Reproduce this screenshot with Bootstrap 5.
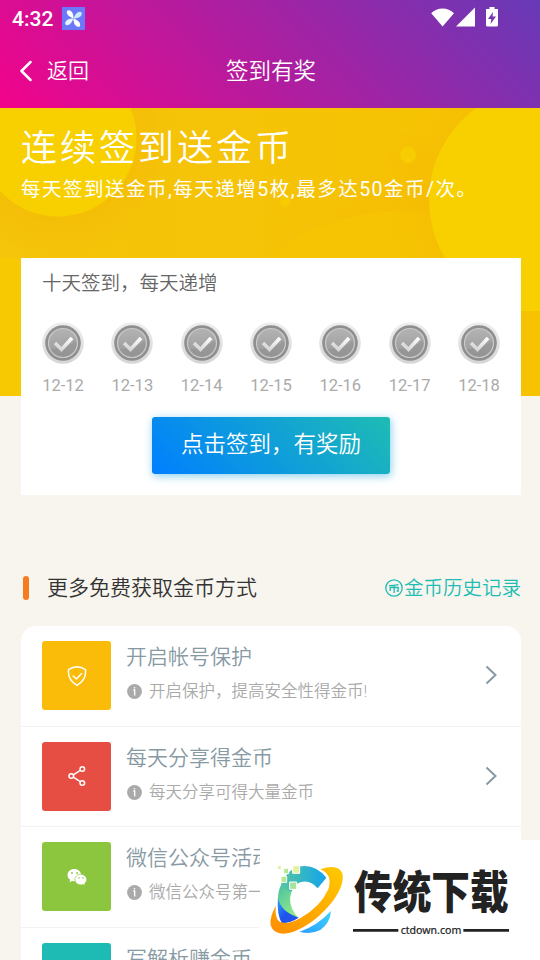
<!DOCTYPE html>
<html lang="zh-CN">
<head>
<meta charset="utf-8">
<meta name="viewport" content="width=device-width, initial-scale=1">
<title>签到有奖</title>
<link href="https://cdn.jsdelivr.net/npm/bootstrap@5.3.0/dist/css/bootstrap.min.css" rel="stylesheet">
<style>
body{font-family:Roboto,"Noto Sans CJK SC",sans-serif;font-weight:350;background:#f8f5ee;height:960px;overflow:hidden;line-height:1}
svg{display:block;flex-shrink:0}
.app-head{height:108px;background:linear-gradient(45deg,#f2038a 0%,#673ab7 100%)}
.status{height:37px;padding:0 41px 0 12px}
.clock{font-size:21px;font-weight:500;line-height:24px}
.title-bar{height:68px;padding-left:20px}
.back-label{font-size:21px;margin-left:15px}
.page-title{font-size:22.5px;padding-left:2px}
.banner{height:288px}
.banner-art{z-index:0}
.banner-text{padding:22px 21px 0;z-index:1}
.banner h1{font-size:36px;letter-spacing:3px;line-height:38px;font-weight:350}
.banner p{font-size:19.5px;letter-spacing:1.5px;line-height:24px;margin-top:10px;white-space:nowrap;font-weight:400}
.sign{margin:-138px 19px 0 21px;height:237px;z-index:2}
.sign-title{font-size:19.5px;line-height:24px;color:#666;padding:14px 21px 0}
.days{padding:26px 21px 0}
.day{width:42px;font-size:16.5px;color:#aaa;font-weight:400;white-space:nowrap}
.day-label{margin-top:12px;line-height:19px}
.sign-btn{width:238px;height:57px;margin-top:22px;border:0;border-radius:3px;font-size:22.5px;font-weight:350;color:#fff;background:linear-gradient(45deg,#007fff,#1ebcb4);box-shadow:1px 2px 8px rgba(15,160,220,.5);padding:0 0 1px}
.section-head{margin:78px 19px 0 23px;height:30px}
.bar-mark{width:6px;height:24px;border-radius:3px;background:#f67c20}
.section-title{font-size:21px;color:#333;margin-left:18px}
.history{font-size:19.5px;color:#1ebcb4}
.history span{padding-top:2px}
.ways{margin:23px 19px 0 21px;border-radius:15px 15px 0 0;height:334px;overflow:hidden}
.way{height:100.6px;padding:15px 21px 0;border-bottom:1px solid #f2f3f3}
.tile{width:69px;height:69px;border-radius:3px}
.t1{background:#fbbc09}.t2{background:#e64d43}.t3{background:#8cc63f}.t4{background:#1ebbb4}
.way-text{margin-left:15px;padding-top:1px}
.way-title{font-size:21px;line-height:30px;color:#8799a3;white-space:nowrap}
.way-sub{font-size:16.5px;line-height:24px;color:#aaa;margin-top:7px;white-space:nowrap}
.way-sub svg{margin:0 7px 0 1px}
.way-sub span{padding-top:1px}
.chev{margin:23px 0 0 auto}
.way .chev{margin-right:2px}
.site-badge{z-index:5;width:280px;height:120px;right:0;top:840px}
</style>
</head>
<body>
<header class="app-head text-white">
  <div class="status d-flex align-items-center">
    <span class="clock">4:32</span>
    <svg width="23" height="23" viewBox="0 0 23 23" style="margin-left:9px"><rect width="23" height="23" fill="#6c78fa"/><defs><path id="blade" d="M11.500 11.500C8 10.500 3.500 9 4 5q.5-1.500 3-1 3.800 1.500 4.500 7.500z"/></defs><g transform="rotate(8 11.500 11.500)"><use href="#blade" fill="#fff"/><use href="#blade" fill="#c9eaff" transform="rotate(90 11.500 11.500)"/><use href="#blade" fill="#fff" transform="rotate(180 11.500 11.500)"/><use href="#blade" fill="#e4f5ff" transform="rotate(270 11.500 11.500)"/></g></svg>
    <svg class="ms-auto" width="68" height="23" viewBox="0 0 68 23" fill="#fff"><path d="M.2 6.200C6-.2 17-.2 23 6.200L11.600 19.500zM25 19.500L44 .5v19z"/><path fill-rule="evenodd" d="M58.500 0h5v2H67v16q0 1.500-1.500 1.500h-9Q55 19.500 55 18V2h3.500zM62 5l-5 7h3.300l-.8 5L65 9.500h-3.500z"/></svg>
  </div>
  <div class="title-bar d-flex align-items-center position-relative">
    <svg width="12" height="22" viewBox="0 0 12 22" fill="none" stroke="#fff" stroke-width="2.500" stroke-linecap="round" stroke-linejoin="round"><path d="M10.500 2L1.500 11l9 9"/></svg>
    <span class="back-label">返回</span>
    <span class="page-title position-absolute start-50 translate-middle-x">签到有奖</span>
  </div>
</header>

<section class="banner position-relative overflow-hidden">
  <svg class="banner-art position-absolute top-0 start-0" width="540" height="288" viewBox="0 0 540 288">
    <defs>
      <linearGradient id="bg" x1="0" y1="0" x2="1" y2="0"><stop offset="0" stop-color="#f4c50a"/><stop offset=".4" stop-color="#f5c308"/><stop offset="1" stop-color="#f7c400"/></linearGradient>
      <radialGradient id="sh"><stop offset=".65" stop-color="#f4b804" stop-opacity=".7"/><stop offset="1" stop-color="#f4b804" stop-opacity="0"/></radialGradient>
    </defs>
    <rect width="540" height="288" fill="url(#bg)"/>
    <circle cx="58" cy="35" r="115" fill="url(#sh)" opacity=".7"/>
    <circle cx="410" cy="200" r="160" fill="url(#sh)" opacity=".45"/>
    <path d="M260 154Q325 103 403 103q45 0 85 22v163H260z" fill="#f6c402"/>
    <circle cx="550" cy="92" r="160" fill="url(#sh)" opacity=".8"/>
    <circle cx="408" cy="47" r="26" fill="url(#sh)" opacity=".3"/>
    <circle cx="285" cy="94" r="17" fill="url(#sh)" opacity=".2"/>
    <circle cx="58" cy="30" r="78.500" fill="#f8d000"/>
    <circle cx="542" cy="92" r="113" fill="#f8d000"/>
    <circle cx="408" cy="47" r="8" fill="#f8cc02"/>
    <circle cx="285" cy="93" r="5.500" fill="#f8ca02"/>
    <path d="M0 150h22v138H0z" fill="#f6c903"/><path d="M521 203h19v85h-19z" fill="#f7c300"/>
  </svg>
  <div class="banner-text position-relative text-white">
    <h1 class="mb-0">连续签到送金币</h1>
    <p class="mb-0">每天签到送金币,每天递增5枚,最多达50金币/次。</p>
  </div>
</section>

<section class="sign bg-white position-relative">
  <div class="sign-title">十天签到，每天递增</div>
  <svg class="position-absolute" width="0" height="0">
    <defs>
      <linearGradient id="rim" x1="0" y1="0" x2="0" y2="1"><stop stop-color="#eee"/><stop offset="1" stop-color="#d5d5d5"/></linearGradient>
      <linearGradient id="face" x1="0" y1="0" x2="0" y2="1"><stop stop-color="#b3b3b3"/><stop offset="1" stop-color="#999"/></linearGradient>
      <linearGradient id="tick" x1="0" y1="1" x2="1" y2="0"><stop stop-color="#d0d0d0"/><stop offset="1" stop-color="#fff"/></linearGradient>
      <symbol id="coin" viewBox="0 0 42 42"><circle cx="21" cy="21" r="20.800" fill="url(#rim)"/><circle cx="21" cy="21" r="17.800" fill="#8f8f8f"/><circle cx="21" cy="21" r="14.500" fill="url(#face)" stroke="#c9c9c9" stroke-width="1.200"/><path d="M8 27Q24 28 34 18q2 8-4 13-9 7-18 1z" fill="#888" opacity=".35"/><path d="M13 21l6.500 6.500L30 16" fill="none" stroke="url(#tick)" stroke-width="3.600"/></symbol>
    </defs>
  </svg>
  <div class="days d-flex justify-content-between text-center">
    <div class="day"><svg width="42" height="42"><use href="#coin"/></svg><div class="day-label">12-12</div></div>
    <div class="day"><svg width="42" height="42"><use href="#coin"/></svg><div class="day-label">12-13</div></div>
    <div class="day"><svg width="42" height="42"><use href="#coin"/></svg><div class="day-label">12-14</div></div>
    <div class="day"><svg width="42" height="42"><use href="#coin"/></svg><div class="day-label">12-15</div></div>
    <div class="day"><svg width="42" height="42"><use href="#coin"/></svg><div class="day-label">12-16</div></div>
    <div class="day"><svg width="42" height="42"><use href="#coin"/></svg><div class="day-label">12-17</div></div>
    <div class="day"><svg width="42" height="42"><use href="#coin"/></svg><div class="day-label">12-18</div></div>
  </div>
  <button class="sign-btn btn d-block mx-auto" type="button">点击签到，有奖励</button>
</section>

<div class="section-head d-flex align-items-center">
  <span class="bar-mark"></span>
  <span class="section-title">更多免费获取金币方式</span>
  <span class="history ms-auto d-flex align-items-center">
    <svg width="18" height="18" viewBox="0 0 18 18" fill="none" stroke="#1ebcb4" stroke-width="1.300" style="margin-right:1px"><circle cx="9" cy="9" r="8.200"/><path d="M4 6.700q5 0 9.500-1M5.200 12V8.500h8V12h-1.500M9.200 6.500v7.500"/></svg><span>金币历史记录</span></span>
</div>

<main class="ways bg-white">
  <div class="way d-flex align-items-start">
    <div class="tile t1 d-flex align-items-center justify-content-center"><svg width="20" height="22" viewBox="0 0 20 22" fill="none" stroke="#fff" stroke-width="1.500" stroke-linecap="round" stroke-linejoin="round"><path d="M10 1.800Q14 2 18.500 4.600 19.500 15 10 20.300.5 15 1.500 4.600 6 2 10 1.800z"/><path d="M6.200 11l3.200 3 5.200-5.500"/></svg></div>
    <div class="way-text"><div class="way-title">开启帐号保护</div>
      <div class="way-sub d-flex align-items-center"><svg width="15" height="15" viewBox="0 0 15 15"><circle cx="7.500" cy="7.500" r="7.400" fill="#aaa"/><path d="M6.300 6h1.400v5.500M7.500 3v1.600" fill="none" stroke="#fff" stroke-width="1.300"/></svg><span>开启保护，提高安全性得金币!</span></div></div>
    <svg class="chev" width="14" height="22" viewBox="0 0 14 22" fill="none" stroke="#8799a3" stroke-width="2"><path d="M2.500 2.500L11.500 11l-9 8.500"/></svg>
  </div>
  <div class="way d-flex align-items-start">
    <div class="tile t2 d-flex align-items-center justify-content-center"><svg width="20" height="22" viewBox="0 0 20 22" fill="none" stroke="#fff" stroke-width="1.500"><circle cx="4.300" cy="11" r="2.300"/><circle cx="15.300" cy="4" r="2.300"/><circle cx="15.300" cy="18" r="2.300"/><path d="M6.300 9.800l7-4.500M6.300 12.200l7 4.500"/></svg></div>
    <div class="way-text"><div class="way-title">每天分享得金币</div>
      <div class="way-sub d-flex align-items-center"><svg width="15" height="15" viewBox="0 0 15 15"><circle cx="7.500" cy="7.500" r="7.400" fill="#aaa"/><path d="M6.300 6h1.400v5.500M7.500 3v1.600" fill="none" stroke="#fff" stroke-width="1.300"/></svg><span>每天分享可得大量金币</span></div></div>
    <svg class="chev" width="14" height="22" viewBox="0 0 14 22" fill="none" stroke="#8799a3" stroke-width="2"><path d="M2.500 2.500L11.500 11l-9 8.500"/></svg>
  </div>
  <div class="way d-flex align-items-start">
    <div class="tile t3 d-flex align-items-center justify-content-center"><svg width="20" height="20" viewBox="0 0 20 20"><path d="M7.300 2C3.400 2 .5 4.700.5 8.100c0 2 1 3.600 2.600 4.700l-.6 2.400 2.600-1.300q1.100.3 2.500.3c3.700 0 6.600-2.700 6.600-6.100S11 2 7.300 2z" fill="#fff"/><path d="M13.900 7.200c-3.300 0-6 2.300-6 5.300s2.700 5.400 6 5.400q1 0 2-.3l2.100 1.200-.5-2c1.300-1 2.200-2.500 2.200-4.200 0-3.100-2.700-5.400-5.800-5.400z" fill="#fff" stroke="#8cc63f" stroke-width=".7"/><g fill="#8cc63f"><circle cx="5" cy="6" r=".9"/><circle cx="10" cy="6" r=".9"/><circle cx="12" cy="11" r=".8"/><circle cx="16" cy="11" r=".8"/></g></svg></div>
    <div class="way-text"><div class="way-title">微信公众号活动</div>
      <div class="way-sub d-flex align-items-center"><svg width="15" height="15" viewBox="0 0 15 15"><circle cx="7.500" cy="7.500" r="7.400" fill="#aaa"/><path d="M6.300 6h1.400v5.500M7.500 3v1.600" fill="none" stroke="#fff" stroke-width="1.300"/></svg><span>微信公众号第一</span></div></div>
  </div>
  <div class="way d-flex align-items-start">
    <div class="tile t4"></div>
    <div class="way-text"><div class="way-title">写解析赚金币</div></div>
  </div>
</main>

<aside class="site-badge position-absolute bg-white">
  <svg width="280" height="120" viewBox="0 15 840 360">
    <defs>
      <linearGradient id="cy" x1="0" y1="0" x2="1" y2="0"><stop stop-color="#54c6a0"/><stop offset="1" stop-color="#12a4ee"/></linearGradient>
      <linearGradient id="gr" x1="0" y1="0" x2=".6" y2="1"><stop stop-color="#42bfa4"/><stop offset="1" stop-color="#93ea86"/></linearGradient>
      <linearGradient id="bl" x1="0" y1="0" x2="1" y2="1"><stop stop-color="#2fa0ff"/><stop offset=".5" stop-color="#1d55ec"/><stop offset="1" stop-color="#2b50e8"/></linearGradient>
      <linearGradient id="or" x1="0" y1="1" x2="1" y2="0"><stop stop-color="#ff8d00"/><stop offset="1" stop-color="#ffca00"/></linearGradient>
      <linearGradient id="lo" x1="0" y1="1" x2="1" y2="0"><stop stop-color="#2f9dff"/><stop offset="1" stop-color="#3ad4fa"/></linearGradient>
    </defs>
    <g transform="translate(6 60)">
      <path d="M207 168Q204 205 175 225 145 240 113 230 165 213 207 168z" fill="url(#lo)"/>
      <path d="M60 84Q44 112 48 152 62 184 110 189 84 164 84 130q1-18 12-34z" fill="url(#gr)"/>
      <path d="M48 130Q58 172 110 188 88 203 60 205 44 180 48 130z" fill="url(#bl)"/>
      <path d="M57 88Q80 34 128 33q38 1 65 35l-26 32q-20-24-45-20-24 3-35 31-15-8-30-23z" fill="url(#cy)"/>
      <path d="M175 43Q228 25 241 55 249 88 212 139 160 205 95 230 38 248 26 211 22 186 42 152 37 184 51 199 72 213 117 188 175 156 199 103 213 58 175 43z" fill="url(#or)"/>
      <g stroke="#fff" stroke-width="3"><path d="M46 32h12v12H46zM92 32h21v23H92z" fill="#e4f2a0"/><path d="M65 40h15v16H65zM57 64h17v18H57z" fill="#b2e890"/><path d="M83 81h21v22H83z" fill="#a5e49a"/></g>
    </g>
    <text transform="translate(282 221) scale(1 1.170)" font-family="Noto Sans CJK SC" font-weight="900" font-size="117" textLength="464" lengthAdjust="spacingAndGlyphs" fill="#222">传统下载</text>
    <path d="M279 282h136v8H279zM610 282h137v8H610z" fill="#222"/>
    <text x="422" y="297" font-family="Noto Sans, sans-serif" font-weight="400" font-size="32" textLength="182" lengthAdjust="spacingAndGlyphs" fill="#222" stroke="#222" stroke-width=".6">ctdown.com</text>
  </svg>
</aside>
<script src="https://cdn.jsdelivr.net/npm/bootstrap@5.3.0/dist/js/bootstrap.bundle.min.js"></script>
</body>
</html>
